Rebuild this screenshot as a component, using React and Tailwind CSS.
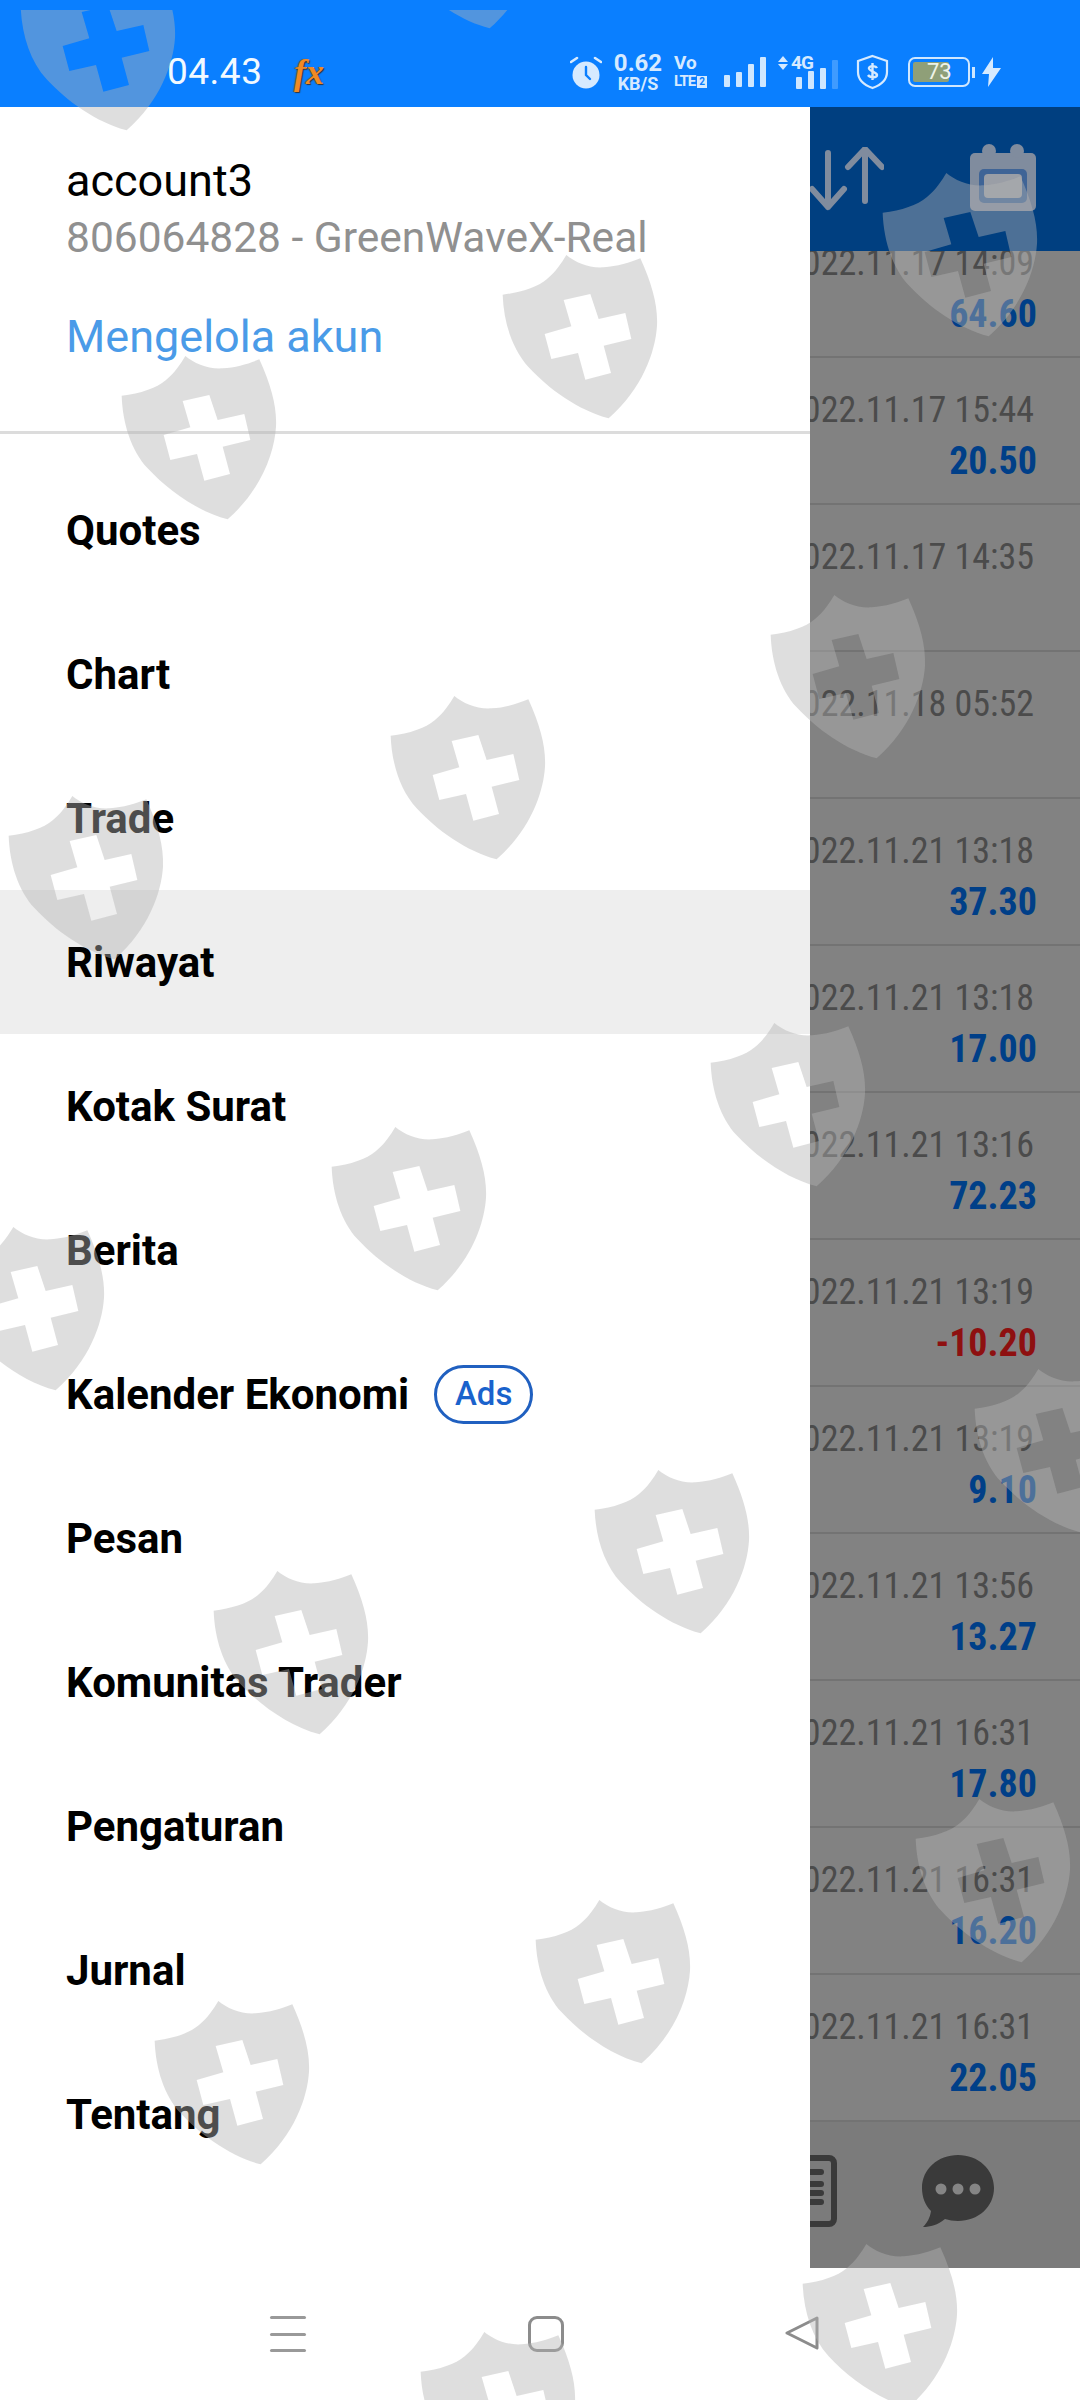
const rows = [
  { date: "2022.11.17 14:09", value: "64.60" },
  { date: "2022.11.17 15:44", value: "20.50" },
  { date: "2022.11.17 14:35" },
  { date: "2022.11.18 05:52" },
  { date: "2022.11.21 13:18", value: "37.30" },
  { date: "2022.11.21 13:18", value: "17.00" },
  { date: "2022.11.21 13:16", value: "72.23" },
  { date: "2022.11.21 13:19", value: "-10.20", loss: true },
  { date: "2022.11.21 13:19", value: "9.10" },
  { date: "2022.11.21 13:56", value: "13.27" },
  { date: "2022.11.21 16:31", value: "17.80" },
  { date: "2022.11.21 16:31", value: "16.20" },
  { date: "2022.11.21 16:31", value: "22.05" },
];

const menu = [
  "Quotes",
  "Chart",
  "Trade",
  "Riwayat",
  "Kotak Surat",
  "Berita",
  "Kalender Ekonomi",
  "Pesan",
  "Komunitas Trader",
  "Pengaturan",
  "Jurnal",
  "Tentang",
];

// top-left of each shield's bounding box
const marks = [
  [21, -33], [384, -135], [503, 255], [122, 356], [771, 595], [391, 696], [9, 796],
  [711, 1023], [332, 1127], [-50, 1227], [975, 1369], [595, 1470], [214, 1571],
  [916, 1799], [536, 1900], [155, 2001], [803, 2244], [421, 2332], [883, 173],
];

function Shield({ x, y }) {
  return (
    <svg
      viewBox="0 0 600 660"
      width="200"
      height="220"
      className="absolute"
      style={{ left: x - 31, top: y - 26 }}
    >
      <path
        fill="rgba(179,179,179,0.43)"
        fillRule="evenodd"
        d="M283 78C310 100 350 118 395 115C435 113 475 100 505 88C540 165 558 230 555 290C550 370 510 480 410 568C320 545 230 480 170 415C120 360 95 280 92 197C150 190 195 175 225 150C250 130 270 100 283 78ZM275 213L355 195L380 270L460 252L478 330L395 350L417 432L340 452L318 372L238 390L218 315L298 292Z"
      />
    </svg>
  );
}

function SignalBars({ heights, dim }) {
  return (
    <div className="flex items-end gap-[6px] h-[30px]">
      {heights.map((h, i) => (
        <div
          key={i}
          className={i === heights.length - 1 && dim ? "w-[6px] rounded-[1px] bg-[#3f9bff]" : "w-[6px] rounded-[1px] bg-[#cfe7ff]"}
          style={{ height: h }}
        />
      ))}
    </div>
  );
}

function StatusBar() {
  return (
    <div className="h-[107px] bg-[#0a7fff] flex items-center pt-[37px] text-[#d6eaff] shrink-0">
      <span className="ml-[167px] w-[92px] text-[37px] leading-[40px] tracking-[0.5px] text-[#f2f9ff]">04.43</span>
      <span className="ml-[35px] w-[34px] font-['Liberation_Serif',serif] italic font-bold text-[36px] leading-[40px] text-[#f08a24] [text-shadow:1px_1px_1px_#333,-1px_0_1px_#555]">
        fx
      </span>
      <svg viewBox="0 0 32 33" width="32" height="33" className="ml-[242px]">
        <circle cx="16" cy="19" r="13.5" fill="#d6eaff" />
        <path d="M16 11v8l4 4" stroke="#0a7fff" strokeWidth="2.4" fill="none" strokeLinecap="round" />
        <path d="M1 6l6-4M31 6l-6-4" stroke="#d6eaff" strokeWidth="2.6" strokeLinecap="round" />
      </svg>
      <div className="ml-[12px] w-[48px] flex flex-col items-center font-bold">
        <span className="text-[24px] leading-[22px]">0.62</span>
        <span className="text-[18px] leading-[18px] mt-[1px]">KB/S</span>
      </div>
      <div className="ml-[12px] w-[36px] flex flex-col font-bold">
        <span className="text-[19px] leading-[15px]">Vo</span>
        <span className="flex items-center text-[15px] leading-[15px] mt-[4px] tracking-[-1px]">
          LTE
          <span className="ml-[2px] w-[10px] h-[12px] bg-[#d6eaff] text-[#0a7fff] text-[10px] leading-[12px] text-center tracking-normal">2</span>
        </span>
      </div>
      <div className="ml-[14px]">
        <SignalBars heights={[12, 15, 23, 30]} />
      </div>
      <div className="ml-[12px] relative w-[60px] h-[33px]">
        <div className="absolute left-0 top-0 flex flex-col gap-[2px] items-center">
          <div className="w-0 h-0 border-x-[5px] border-x-transparent border-b-[6px] border-b-[#d6eaff]" />
          <div className="w-0 h-0 border-x-[5px] border-x-transparent border-t-[6px] border-t-[#d6eaff]" />
        </div>
        <span className="absolute left-[13px] -top-[3px] text-[19px] leading-[20px] font-bold tracking-[-1px]">4G</span>
        <div className="absolute left-[18px] bottom-0">
          <SignalBars heights={[12, 18, 21, 29]} dim />
        </div>
      </div>
      <svg viewBox="0 0 33 36" width="33" height="36" className="ml-[18px]">
        <path d="M16.5 2L31 7v11c0 8-6 13-14.5 16C8 31 2 26 2 18V7z" fill="none" stroke="#d6eaff" strokeWidth="2.2" />
        <path d="M21 14c-1-2-7-3-8 0s8 4 8 7-7 3-9 0M16.5 9v17" fill="none" stroke="#d6eaff" strokeWidth="2.4" />
      </svg>
      <div className="ml-[19px] relative w-[62px] h-[30px] rounded-[7px] border-[2px] border-[#cfe7ff] p-[3px]">
        <div className="w-[36px] h-full bg-[#8f9f78] rounded-[2px]" />
        <span className="absolute left-[17px] top-0 text-[22px] leading-[26px] text-[#eef3e8]">73</span>
      </div>
      <div className="ml-[2px] w-[3px] h-[11px] bg-[#cfe7ff]" />
      <svg viewBox="0 0 19 30" width="19" height="30" className="ml-[7px]">
        <path d="M11 0L0 17h7l-1 13L19 11h-8z" fill="#d6eaff" />
      </svg>
    </div>
  );
}

function Drawer() {
  return (
    <div className="w-[810px] bg-white shrink-0">
      <div className="h-[327px] pt-[48px] pl-[66px] border-b-[3px] border-[#dcdcdc]">
        <div className="text-[45px] leading-[52px] text-black">account3</div>
        <div className="mt-[5px] text-[42.5px] leading-[52px] text-[#909090] whitespace-nowrap">806064828 - GreenWaveX-Real</div>
        <div className="mt-[47px] text-[45px] leading-[52px] text-[#4a9be8]">Mengelola akun</div>
      </div>
      <div className="pt-[24px]">
        {menu.map((item) => (
          <div
            key={item}
            className={
              item === "Riwayat"
                ? "h-[144px] pl-[66px] flex items-center bg-[#eeeeee] text-[42px] font-bold text-black"
                : "h-[144px] pl-[66px] flex items-center text-[42px] font-bold text-black"
            }
          >
            {item}
            {item === "Kalender Ekonomi" && (
              <span className="ml-[25px] w-[99px] h-[59px] rounded-full border-[3px] border-[#2060c0] flex items-center justify-center text-[33px] font-medium text-[#1a62cc]">
                Ads
              </span>
            )}
          </div>
        ))}
      </div>
    </div>
  );
}

function HistoryPanel() {
  return (
    <div className="flex-1 min-w-0 bg-[#828282] flex flex-col overflow-hidden">
      <div className="h-[144px] bg-[#003f80] flex items-start relative z-10 shrink-0">
        <svg viewBox="0 0 74 64" width="74" height="64" className="mt-[40px] shrink-0">
          <path d="M18 6v54M2 42l16 18 16-18M55 54V2M38 20L55 2l17 18" fill="none" stroke="#808c9e" strokeWidth="6" strokeLinecap="round" strokeLinejoin="round" />
        </svg>
        <svg viewBox="0 0 68 70" width="68" height="70" className="ml-[85px] mt-[36px] shrink-0">
          <rect x="1" y="10" width="66" height="58" rx="5" fill="#808c9e" />
          <circle cx="20" cy="8" r="7" fill="#808c9e" />
          <circle cx="48" cy="8" r="7" fill="#808c9e" />
          <rect x="10" y="26" width="48" height="34" rx="5" fill="#3f6496" />
          <rect x="15" y="31" width="38" height="24" rx="4" fill="#9a9ea6" />
        </svg>
      </div>
      <div className="-mt-[40px]">
        {rows.map((row, i) => (
          <div key={i} className="h-[147px] border-b-[2px] border-[#737373] flex flex-col items-end pt-[32px] pr-[46px] overflow-hidden">
            <div className="whitespace-nowrap text-[36px] leading-[40px] text-[#4b4b4b] [font-stretch:85%]">{row.date}</div>
            {row.value && (
              <div className={row.loss ? "mt-[9px] -mr-[3px] text-[38px] leading-[44px] font-bold text-[#8e1010] [font-stretch:78%]" : "mt-[9px] -mr-[3px] text-[38px] leading-[44px] font-bold text-[#003f88] [font-stretch:78%]"}>
                {row.value}
              </div>
            )}
          </div>
        ))}
      </div>
      <div className="flex-1 bg-[#7b7b7b] flex justify-end items-start pt-[33px] pr-[86px] gap-[85px]">
        <svg viewBox="0 0 72 72" width="72" height="72" className="shrink-0">
          <rect x="3" y="3" width="66" height="66" rx="5" fill="none" stroke="#3a3a3a" strokeWidth="6" />
          <path d="M16 17h40M16 29h40M16 38h40M16 47h40" stroke="#3a3a3a" strokeWidth="6" strokeLinecap="round" />
        </svg>
        <svg viewBox="0 0 72 72" width="72" height="72" className="shrink-0">
          <path d="M36 0c20 0 36 14 36 33S56 66 36 66c-5 0-9-1-13-2C16 70 8 72 1 72c4-4 7-9 8-16C3 50 0 42 0 33 0 14 16 0 36 0z" fill="#3a3a3a" />
          <circle cx="19" cy="34" r="5.5" fill="#858585" />
          <circle cx="36" cy="34" r="5.5" fill="#858585" />
          <circle cx="53" cy="34" r="5.5" fill="#858585" />
        </svg>
      </div>
    </div>
  );
}

function NavBar() {
  return (
    <div className="h-[132px] bg-white flex items-start pt-[48px] pl-[270px] gap-[222px] shrink-0">
      <div className="w-[36px] h-[36px] flex flex-col justify-between shrink-0">
        <div className="h-[3px] rounded-full bg-[#999999]" />
        <div className="h-[3px] rounded-full bg-[#999999]" />
        <div className="h-[3px] rounded-full bg-[#999999]" />
      </div>
      <div className="w-[36px] h-[36px] rounded-[9px] border-[3px] border-[#8c8c8c] shrink-0" />
      <svg viewBox="0 0 34 34" width="34" height="34" className="-ml-[1px] shrink-0">
        <path d="M32 2L2 17l30 15z" fill="none" stroke="#8c8c8c" strokeWidth="3" strokeLinejoin="round" />
      </svg>
    </div>
  );
}

export default function App() {
  return (
    <div className="relative w-[1080px] h-[2400px] overflow-hidden flex flex-col bg-white font-['Roboto',sans-serif]">
      <StatusBar />
      <div className="flex-1 min-h-0 flex">
        <Drawer />
        <HistoryPanel />
      </div>
      <NavBar />
      <div className="absolute left-0 right-0 top-[10px] bottom-0 overflow-hidden pointer-events-none z-20">
        <div className="relative -top-[10px]">
          {marks.map(([x, y], i) => (
            <Shield key={i} x={x} y={y} />
          ))}
        </div>
      </div>
    </div>
  );
}
